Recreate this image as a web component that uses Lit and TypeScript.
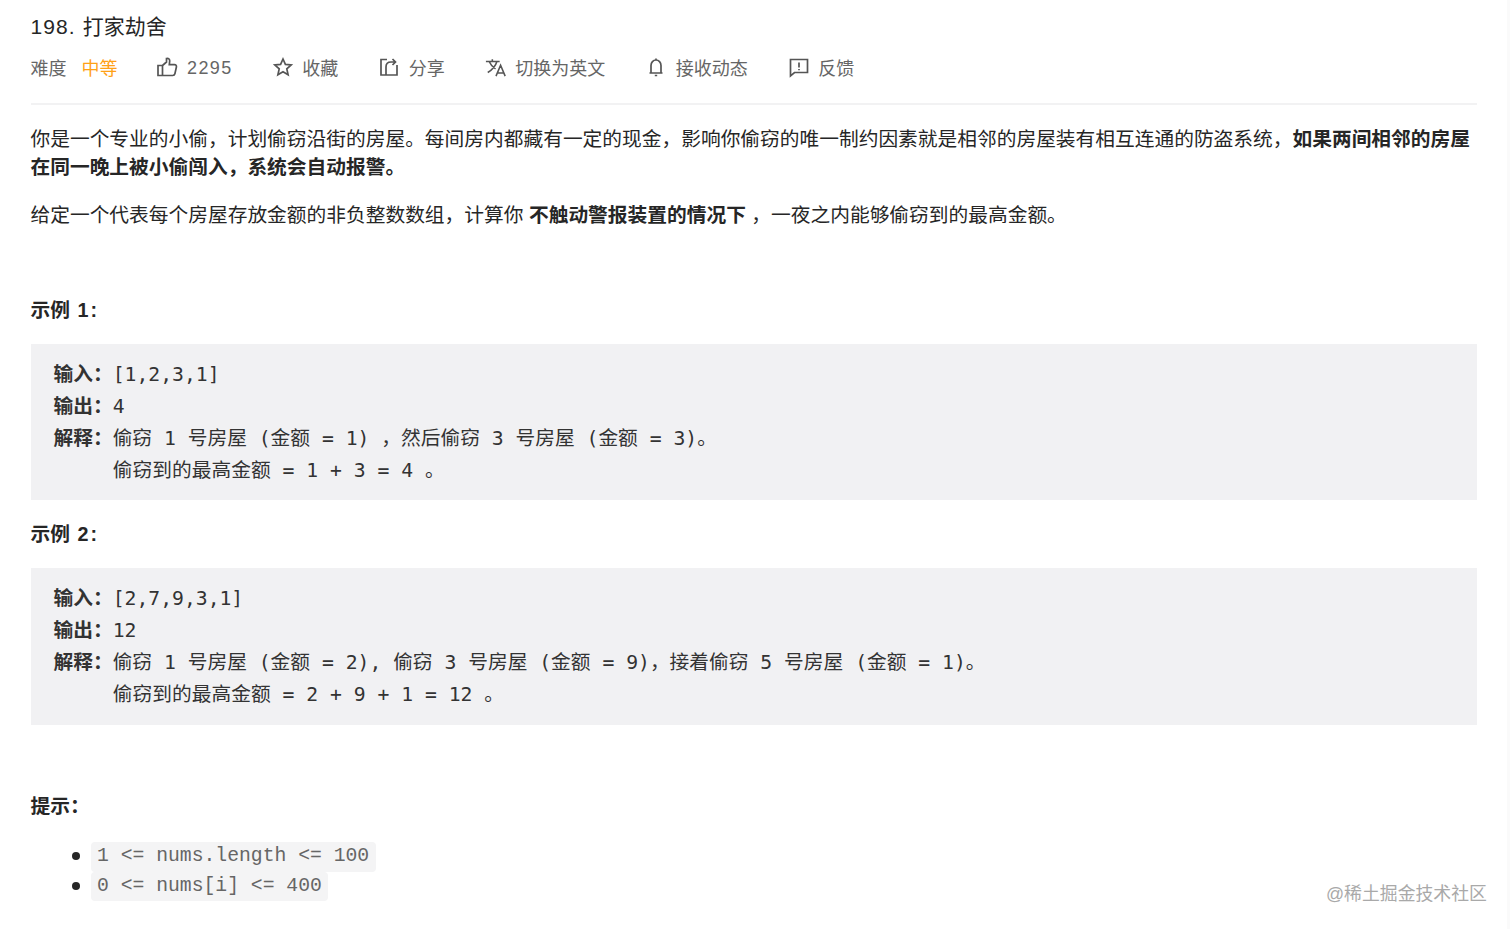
import { LitElement, html, css } from 'lit';
import { customElement } from 'lit/decorators.js';

const thumb = html`<svg viewBox="0 0 22 22"><path d="M2 9.5h4.500v10H2zM6.500 9.500 10.500 6V2.500c2-.6 3.300.7 3.200 2.500l-.4 3.600h5.200c1.300 0 2.200 1.200 1.900 2.400l-1.500 6.700c-.3 1.300-1.200 1.800-2.200 1.800H6.500" /></svg>`;
const star = html`<svg viewBox="0 0 22 22"><path d="m11 3 2.400 5.400 5.800.6-4.400 3.900 1.300 5.800L11 15.700l-5.100 3 1.300-5.800L2.800 9l5.800-.6z" /></svg>`;
const share = html`<svg viewBox="0 0 22 22"><path d="M9 3.500H3V19h16V9M8 19v-8c0-3 2-5 5-5h3.500M14.500 3l3 3-3 3" /></svg>`;
const translate = html`<svg viewBox="0 0 24 24"><path d="M1 6h15M8 3.500V6M13 6c-1.500 5-5 9-10 12M4.500 6c1.500 3.500 4 6 7 8M12 22l5-12 5 12M13.800 18.500h6.400" /></svg>`;
const bell = html`<svg viewBox="0 0 22 22"><path d="M4.500 17h13M6 17V9.500c0-3 2.200-5.500 5-5.500s5 2.500 5 5.500V17M11 2.500V4M9.800 19.500h2.400" /></svg>`;
const feedback = html`<svg viewBox="0 0 22 22"><path d="M2.500 3.500h17v13h-13l-4 3.500zM11 6.500v5M11 13v1.200" /></svg>`;

@customElement('app-root')
export class AppRoot extends LitElement {
  static styles = css`
    :host {
      display: block;
      height: 929px;
      overflow: hidden;
      background: #fff;
      color: #262626;
      font-family: 'Liberation Sans', 'Noto Sans CJK SC', sans-serif;
      font-size: 19.73px;
      box-sizing: border-box;
    }
    .page {
      padding: 12px 35px 0 30.5px;
    }
    .title {
      font-size: 21px;
      line-height: 30px;
      color: #262626;
    }
    .title .num {
      letter-spacing: 1.1px;
    }
    .meta {
      display: flex;
      align-items: center;
      height: 30px;
      margin-top: 10px;
      padding-bottom: 21px;
      border-bottom: 2px solid #f2f2f3;
      font-size: 18px;
      color: #666;
    }
    .meta span {
      white-space: nowrap;
    }
    .level {
      color: #ffa116;
      margin-left: 15px;
    }
    .item {
      display: flex;
      align-items: center;
      gap: 8.5px;
      margin-left: 40px;
    }
    .level + .item {
      margin-left: 38px;
    }
    .item svg {
      width: 22px;
      height: 22px;
      fill: none;
      stroke: #555;
      stroke-width: 1.7;
    }
    .count {
      margin-left: 1px;
      margin-right: -1px;
      padding-top: 2px;
      letter-spacing: 1.4px;
    }
    p {
      margin: 0;
      line-height: 28px;
    }
    .lead {
      margin-top: 20px;
    }
    .next {
      margin-top: 20px;
    }
    .head {
      font-weight: 700;
    }
    .head .num {
      margin-left: 2px;
      letter-spacing: 2px;
    }
    .head-first {
      margin-top: 67px;
    }
    pre {
      margin: 20px 0 0;
      padding: 15px 23px 13px;
      background: #f1f1f3;
      font-family: 'DejaVu Sans Mono', 'Noto Sans CJK SC', monospace;
      font-size: 19.73px;
      line-height: 32px;
      color: #333;
    }
    pre.tall {
      padding-bottom: 14px;
    }
    pre b {
      font-weight: 700;
    }
    .gap {
      margin-top: 20px;
    }
    .hint {
      margin-top: 67px;
    }
    ul {
      margin: 22px 0 0;
      padding: 0 0 0 40px;
      list-style: none;
    }
    li {
      position: relative;
      display: flex;
      padding-left: 20px;
    }
    li::before {
      content: '';
      position: absolute;
      left: 1.5px;
      top: 10px;
      width: 8px;
      height: 8px;
      border-radius: 50%;
      background: #262626;
    }
    code {
      padding: 0 6.5px;
      border-radius: 4px;
      background: #f4f4f5;
      font-family: 'Liberation Mono', monospace;
      font-size: 19.73px;
      line-height: 29.5px;
      color: #666;
    }
    .mark {
      position: absolute;
      left: 1326px;
      top: 882px;
      font-size: 17.85px;
      line-height: 24px;
      color: #a9a9a9;
      white-space: nowrap;
    }
    .edge {
      position: absolute;
      right: 2px;
      top: 0;
      width: 3px;
      height: 929px;
      background: #fafafa;
    }
  `;

  render() {
    return html`
      <div class="page">
        <div class="title"><span class="num">198. </span>打家劫舍</div>
        <div class="meta">
          <span>难度</span>
          <span class="level">中等</span>
          <span class="item">${thumb}<span class="count">2295</span></span>
          <span class="item">${star}<span>收藏</span></span>
          <span class="item">${share}<span>分享</span></span>
          <span class="item">${translate}<span>切换为英文</span></span>
          <span class="item">${bell}<span>接收动态</span></span>
          <span class="item">${feedback}<span>反馈</span></span>
        </div>
        <p class="lead">你是一个专业的小偷，计划偷窃沿街的房屋。每间房内都藏有一定的现金，影响你偷窃的唯一制约因素就是相邻的房屋装有相互连通的防盗系统，<b>如果两间相邻的房屋在同一晚上被小偷闯入，系统会自动报警。</b></p>
        <p class="next">给定一个代表每个房屋存放金额的非负整数数组，计算你 <b>不触动警报装置的情况下</b> ，一夜之内能够偷窃到的最高金额。</p>
        <p class="head head-first">示例 <span class="num">1:</span></p>
        <pre><b>输入：</b>[1,2,3,1]
<b>输出：</b>4
<b>解释：</b>偷窃 1 号房屋 (金额 = 1) ，然后偷窃 3 号房屋 (金额 = 3)。
     偷窃到的最高金额 = 1 + 3 = 4 。</pre>
        <p class="head gap">示例 <span class="num">2:</span></p>
        <pre class="tall"><b>输入：</b>[2,7,9,3,1]
<b>输出：</b>12
<b>解释：</b>偷窃 1 号房屋 (金额 = 2), 偷窃 3 号房屋 (金额 = 9)，接着偷窃 5 号房屋 (金额 = 1)。
     偷窃到的最高金额 = 2 + 9 + 1 = 12 。</pre>
        <p class="head hint">提示：</p>
        <ul>
          <li><code>1 &lt;= nums.length &lt;= 100</code></li>
          <li><code>0 &lt;= nums[i] &lt;= 400</code></li>
        </ul>
      </div>
      <div class="edge"></div>
      <div class="mark">@稀土掘金技术社区</div>
    `;
  }
}
